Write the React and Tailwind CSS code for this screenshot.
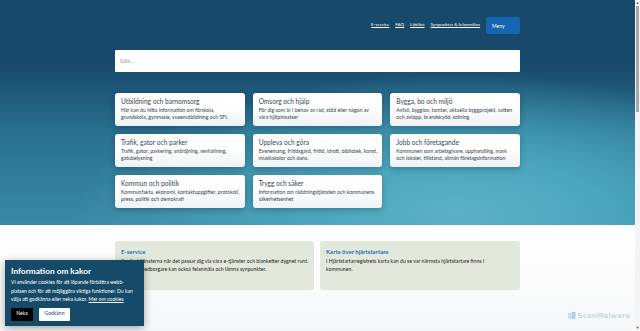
export default function App() {
  const cards = [
    ["Utbildning och barnomsorg", ["Här kan du hitta information om förskola,", "grundskola, gymnasie, vuxenutbildning och SFI."]],
    ["Omsorg och hjälp", ["För dig som är i behov av råd, stöd eller någon av", "våra hjälpinsatser"]],
    ["Bygga, bo och miljö", ["Avfall, bygglov, tomter, aktuella byggprojekt, vatten", "och avlopp, brandskydd, sotning"]],
    ["Trafik, gator och parker", ["Trafik, gator, parkering, snöröjning, renhållning,", "gatubelysning"]],
    ["Uppleva och göra", ["Evenemang, fritidsgård, fritid, idrott, bibliotek, konst,", "musikskolor och dans."]],
    ["Jobb och företagande", ["Kommunen som arbetsgivare, upphandling, mark", "och lokaler, tillstånd, allmän företagsinformation"]],
    ["Kommun och politik", ["Kommunfakta, ekonomi, kontaktuppgifter, protokoll,", "press, politik och demokrati"]],
    ["Trygg och säker", ["Information om räddningstjänsten och kommunens", "säkerhetsenhet"]],
  ];
  return (
    <div className="relative w-[640px] h-[331px] overflow-hidden bg-white flex" style={{ fontFamily: "Lato, 'Open Sans', sans-serif" }}>
      <div className="w-[635px] flex flex-col">
        <div className="h-[225px] bg-[radial-gradient(ellipse_60%_62%_at_72%_95%,#5cb2c7_0%,#4aa5bd_40%,rgba(60,150,178,0)_100%),linear-gradient(180deg,#17496a_0%,#17496a_28%,#2a7190_60%,#3a8aa6_100%)] flex flex-col px-[115px]">
          <div className="flex justify-end items-center gap-[6px] pt-[11px] h-[28px] box-content">
            <div className="flex items-center gap-[6px] text-[4.5px] text-white underline">
              <span>E-service</span>
              <span>FAQ</span>
              <span>Lättläst</span>
              <span>Synpunkter &amp; felanmälan</span>
            </div>
            <div className="w-[34px] h-[17px] bg-[#1565b0] rounded-[2px] text-white text-[5px] pl-[6px] pt-[6px]">Meny</div>
          </div>
          <div className="mt-[11px] h-[22px] bg-white flex items-center px-[5px] text-[6.5px] text-[#9a9a9a] rounded-[1px]">Sök...</div>
          <div className="mt-[21px] grid grid-cols-3 gap-x-[8px] gap-y-[8px]">
            {cards.map(([t, d]) => (
              <div key={t} className="h-[33px] rounded-[3px] bg-[linear-gradient(180deg,#ffffff_0%,#ffffff_40%,#edf2f5_100%)] shadow-[0_2px_6px_rgba(0,0,0,0.25)] pl-[6px] pr-[3px] pt-[4px] text-[#344656]">
                <div className="text-[6.6px] leading-[9px]">{t}</div>
                <div className="text-[5.2px] leading-[7px] mt-[0.5px] text-[#35434f] whitespace-nowrap">
                  <div>{d[0]}</div>
                  <div>{d[1]}</div>
                </div>
              </div>
            ))}
          </div>
        </div>
        <div className="flex-1 bg-[linear-gradient(180deg,#ffffff_0%,#f6f7f8_100%)] px-[115px] pt-[16px] flex gap-[6px]">
          <div className="w-[199px] h-[49px] bg-[#e3e8dc] rounded-[3px] pl-[6px] pr-[2px] pt-[7px]">
            <div className="text-[6px] font-bold text-[#1d6fb5] leading-[8px]">E-service</div>
            <div className="text-[5.2px] leading-[8px] mt-[1px] text-[#222] whitespace-nowrap">
              <div>Använd tjänsterna när det passar dig via våra e-tjänster och blanketter dygnet runt.</div>
              <div>Du som medborgare kan också felanmäla och lämna synpunkter.</div>
            </div>
          </div>
          <div className="w-[200px] h-[49px] bg-[#e3e8dc] rounded-[3px] pl-[6px] pr-[2px] pt-[7px]">
            <div className="text-[6px] font-bold text-[#1d6fb5] leading-[8px]">Karta över hjärtstartare</div>
            <div className="text-[5.2px] leading-[8px] mt-[1px] text-[#222] whitespace-nowrap">
              <div>I Hjärtstartarregistrets karta kan du se var närmsta hjärtstartare finns i</div>
              <div>kommunen.</div>
            </div>
          </div>
        </div>
      </div>
      <div className="w-[5px] h-full bg-[#f4f4f4] flex flex-col items-center relative">
        <div className="text-[4px] leading-[5px] text-[#555]">▲</div>
        <div className="w-[3px] h-[106px] bg-[#a8a8a8] mt-[1px]"></div>
        <div className="absolute bottom-[1px] text-[4px] leading-[5px] text-[#555]">▼</div>
      </div>
      <div className="absolute right-[10px] bottom-[10px] flex items-center gap-[2px] text-[#c9d8ea] text-[7px] font-bold" style={{ fontFamily: "'DejaVu Sans', sans-serif" }}>
        <svg width="8" height="8" viewBox="0 0 8 8"><rect x="0" y="1" width="3" height="6" fill="#c9dbef" /><rect x="3.5" y="0" width="4" height="7" fill="#b1cbe8" /></svg>
        <span>ScanMalware</span>
      </div>
      <div className="absolute left-[5px] top-[260px] w-[139px] h-[66px] bg-[#164a69] shadow-[0_2px_8px_rgba(0,0,0,0.35)] px-[6px] pt-[6px] text-white">
        <div className="text-[8.3px] font-bold leading-[10px]">Information om kakor</div>
        <div className="text-[5px] leading-[8.5px] mt-[2px] whitespace-nowrap">
          <div>Vi använder cookies för att löpande förbättra webb-</div>
          <div>platsen och för att möjliggöra viktiga funktioner. Du kan</div>
          <div>välja att godkänna eller neka kakor. <span className="underline">Mer om cookies</span></div>
        </div>
        <div className="flex gap-[6px] mt-[4px]">
          <div className="w-[22px] h-[13px] bg-black text-white text-[5px] flex items-center justify-center">Neka</div>
          <div className="w-[31px] h-[13px] bg-white text-[#164a69] text-[5px] flex items-center justify-center rounded-[1px]">Godkänn</div>
        </div>
      </div>
    </div>
  );
}
